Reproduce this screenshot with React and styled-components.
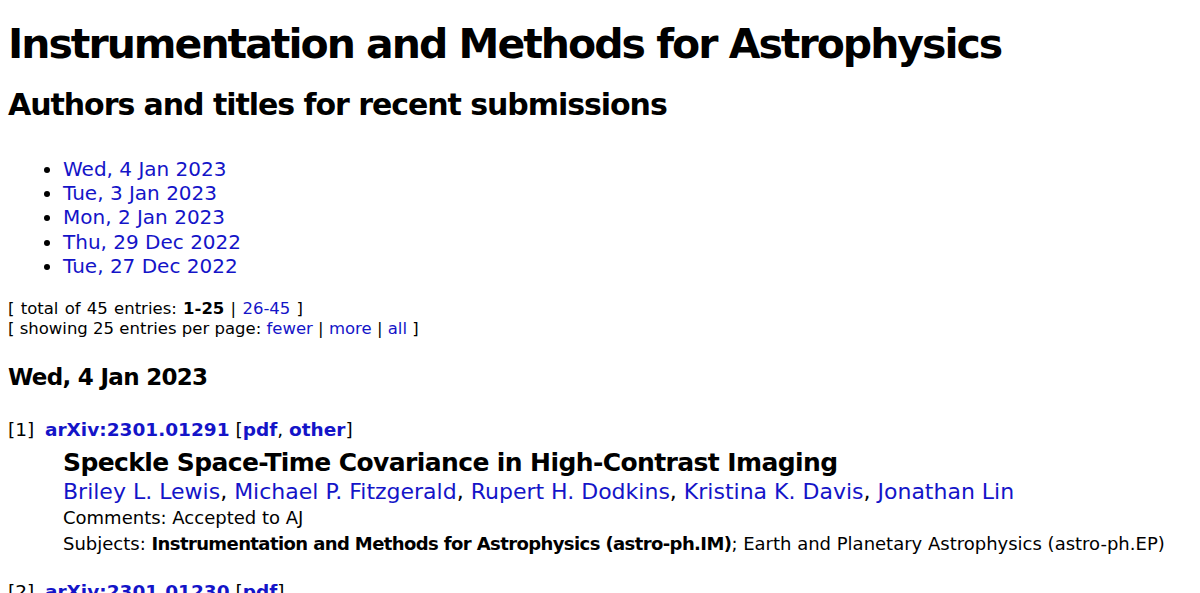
import React from "react";
import styled, { createGlobalStyle } from "styled-components";

const GlobalStyle = createGlobalStyle`
  html, body {
    margin: 0;
    background: #fff;
  }
  body {
    padding: 0 8px;
    font-family: "DejaVu Sans", Verdana, sans-serif;
    color: #000;
  }
`;

const Page = styled.div`
  display: flex;
  flex-direction: column;
`;

const Title = styled.h1`
  margin: 19px 0 0;
  font-size: 41px;
  line-height: 50px;
  letter-spacing: -2px;
  font-weight: bold;
`;

const Subtitle = styled.h2`
  margin: 18px 0 0;
  font-size: 30px;
  line-height: 36px;
  letter-spacing: -1.05px;
  font-weight: bold;
`;

const DateList = styled.ul`
  margin: 34px 0 0;
  padding-left: 55px;
  font-size: 20px;
  line-height: 24.2px;
`;

const Link = styled.a`
  color: #1414c8;
  text-decoration: none;
  font-weight: ${(p) => (p.$bold ? "bold" : "normal")};
`;

const Paging = styled.div`
  margin-top: 21px;
  font-size: 16.5px;
  line-height: 20px;
`;

const PagingLine = styled.div`
  word-spacing: ${(p) => (p.$wide ? "1px" : "0")};
`;

const DayHeading = styled.h3`
  margin: 24px 0 0;
  font-size: 23px;
  line-height: 28px;
  letter-spacing: -0.7px;
  font-weight: bold;
`;

const Entry = styled.dl`
  margin: ${(p) => (p.$first ? "26.5px" : "22.5px")} 0 0;
`;

const EntryHead = styled.dt`
  display: flex;
  font-size: 18.5px;
  line-height: 24px;
`;

const Num = styled.span`
  width: 37px;
  font-weight: normal;
`;

const EntryBody = styled.dd`
  margin: 6.5px 0 0 55px;
`;

const PaperTitle = styled.div`
  font-size: 25px;
  line-height: 30px;
  letter-spacing: -0.6px;
  font-weight: bold;
`;

const Authors = styled.div`
  font-size: 22px;
  line-height: 27px;
`;

const Meta = styled.div`
  font-size: 18px;
  line-height: 26px;

  b {
    letter-spacing: -0.6px;
  }
`;

const dates = [
  "Wed, 4 Jan 2023",
  "Tue, 3 Jan 2023",
  "Mon, 2 Jan 2023",
  "Thu, 29 Dec 2022",
  "Tue, 27 Dec 2022",
];

const authors = [
  "Briley L. Lewis",
  "Michael P. Fitzgerald",
  "Rupert H. Dodkins",
  "Kristina K. Davis",
  "Jonathan Lin",
];

export default function App() {
  return (
    <Page>
      <GlobalStyle />
      <Title>Instrumentation and Methods for Astrophysics</Title>
      <Subtitle>Authors and titles for recent submissions</Subtitle>
      <DateList>
        {dates.map((d) => (
          <li key={d}>
            <Link href="#">{d}</Link>
          </li>
        ))}
      </DateList>
      <Paging>
        <PagingLine $wide>
          [ total of 45 entries: <b>1-25</b> | <Link href="#">26-45</Link> ]
        </PagingLine>
        <PagingLine>
          [ showing 25 entries per page: <Link href="#">fewer</Link> |{" "}
          <Link href="#">more</Link> | <Link href="#">all</Link> ]
        </PagingLine>
      </Paging>
      <DayHeading>Wed, 4 Jan 2023</DayHeading>
      <Entry $first>
        <EntryHead>
          <Num>[1]</Num>
          <span>
            <Link $bold href="#">arXiv:2301.01291</Link> [
            <Link $bold href="#">pdf</Link>, <Link $bold href="#">other</Link>]
          </span>
        </EntryHead>
        <EntryBody>
          <PaperTitle>Speckle Space-Time Covariance in High-Contrast Imaging</PaperTitle>
          <Authors>
            {authors.map((a, i) => (
              <React.Fragment key={a}>
                <Link href="#">{a}</Link>
                {i < authors.length - 1 ? ", " : ""}
              </React.Fragment>
            ))}
          </Authors>
          <Meta>Comments: Accepted to AJ</Meta>
          <Meta>
            Subjects: <b>Instrumentation and Methods for Astrophysics (astro-ph.IM)</b>;
            Earth and Planetary Astrophysics (astro-ph.EP)
          </Meta>
        </EntryBody>
      </Entry>
      <Entry>
        <EntryHead>
          <Num>[2]</Num>
          <span>
            <Link $bold href="#">arXiv:2301.01230</Link> [
            <Link $bold href="#">pdf</Link>]
          </span>
        </EntryHead>
      </Entry>
    </Page>
  );
}
